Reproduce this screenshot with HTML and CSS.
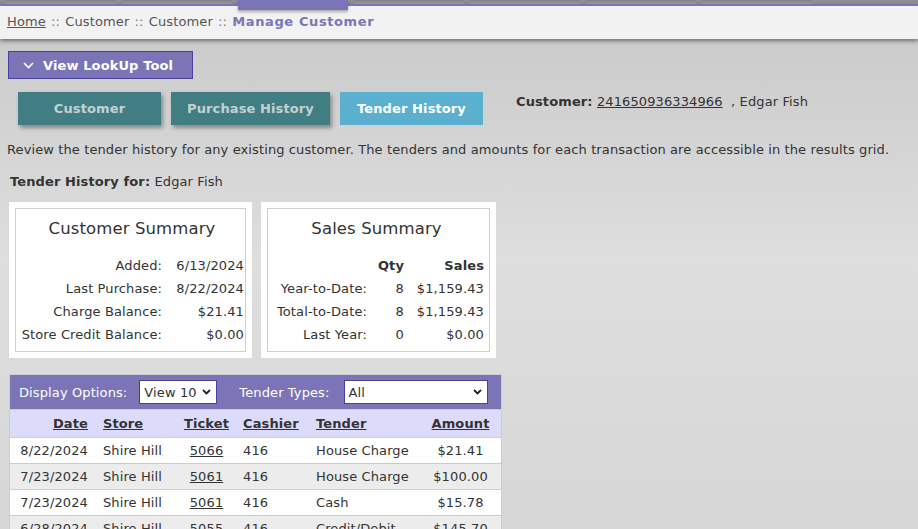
FILE: index.html
```html
<!DOCTYPE html>
<html>
<head>
    <title>Manage Customer</title>
    <link rel="stylesheet" href="styles.css">
</head>
<body>
    <div class="top-nav">
        <span class="nav-tab"></span>
        <span class="nav-tab"></span>
        <span class="nav-tab active"></span>
        <span class="nav-tab"></span>
        <span class="nav-tab"></span>
        <span class="nav-tab"></span>
        <span class="nav-tab"></span>
    </div>
    <div class="breadcrumb">
        <a href="#">Home</a> <span class="sep">::</span> Customer <span class="sep">::</span> Customer <span class="sep">::</span> <span class="current">Manage Customer</span>
    </div>

    <div class="content">
        <button class="lookup-btn">
            <svg width="11" height="7" viewBox="0 0 11 7"><path d="M1 1 L5.5 5.5 L10 1" fill="none" stroke="#fff" stroke-width="1.6"/></svg>
            View LookUp Tool
        </button>

        <div class="tab-row">
            <button class="page-tab tab-customer">Customer</button>
            <button class="page-tab tab-purchase">Purchase History</button>
            <button class="page-tab selected">Tender History</button>
            <div class="customer-info">
                <b>Customer:</b> <a href="#">241650936334966</a> &nbsp;, Edgar Fish
            </div>
        </div>

        <p class="description">Review the tender history for any existing customer. The tenders and amounts for each transaction are accessible in the results grid.</p>

        <div class="history-for"><b>Tender History for:</b> Edgar Fish</div>

        <div class="summaries">
            <div class="card">
                <div class="card-inner">
                    <h2>Customer Summary</h2>
                    <table class="summary-table cust">
                        <tr><td>Added:</td><td>6/13/2024</td></tr>
                        <tr><td>Last Purchase:</td><td>8/22/2024</td></tr>
                        <tr><td>Charge Balance:</td><td>$21.41</td></tr>
                        <tr><td>Store Credit Balance:</td><td>$0.00</td></tr>
                    </table>
                </div>
            </div>
            <div class="card">
                <div class="card-inner">
                    <h2>Sales Summary</h2>
                    <table class="summary-table sales">
                        <tr class="head"><td></td><td>Qty</td><td>Sales</td></tr>
                        <tr><td>Year-to-Date:</td><td>8</td><td>$1,159.43</td></tr>
                        <tr><td>Total-to-Date:</td><td>8</td><td>$1,159.43</td></tr>
                        <tr><td>Last Year:</td><td>0</td><td>$0.00</td></tr>
                    </table>
                </div>
            </div>
        </div>

        <div class="grid">
            <div class="grid-options">
                <label>Display Options:</label>
                <div class="fake-select view">View 10 <svg width="9" height="6" viewBox="0 0 9 6"><path d="M1 1 L4.5 4.5 L8 1" fill="none" stroke="#222" stroke-width="1.8"/></svg></div>
                <label class="types-label">Tender Types:</label>
                <div class="fake-select types">All <svg width="9" height="6" viewBox="0 0 9 6"><path d="M1 1 L4.5 4.5 L8 1" fill="none" stroke="#222" stroke-width="1.8"/></svg></div>
            </div>
            <table class="results">
                <thead>
                    <tr>
                        <th class="c-date"><a href="#">Date</a></th>
                        <th class="c-store"><a href="#">Store</a></th>
                        <th class="c-ticket"><a href="#">Ticket</a></th>
                        <th class="c-cashier"><a href="#">Cashier</a></th>
                        <th class="c-tender"><a href="#">Tender</a></th>
                        <th class="c-amount"><a href="#">Amount</a></th>
                    </tr>
                </thead>
                <tbody>
                    <tr>
                        <td class="c-date">8/22/2024</td><td class="c-store">Shire Hill</td>
                        <td class="c-ticket"><a href="#">5066</a></td><td class="c-cashier">416</td>
                        <td class="c-tender">House Charge</td><td class="c-amount">$21.41</td>
                    </tr>
                    <tr>
                        <td class="c-date">7/23/2024</td><td class="c-store">Shire Hill</td>
                        <td class="c-ticket"><a href="#">5061</a></td><td class="c-cashier">416</td>
                        <td class="c-tender">House Charge</td><td class="c-amount">$100.00</td>
                    </tr>
                    <tr>
                        <td class="c-date">7/23/2024</td><td class="c-store">Shire Hill</td>
                        <td class="c-ticket"><a href="#">5061</a></td><td class="c-cashier">416</td>
                        <td class="c-tender">Cash</td><td class="c-amount">$15.78</td>
                    </tr>
                    <tr>
                        <td class="c-date">6/28/2024</td><td class="c-store">Shire Hill</td>
                        <td class="c-ticket"><a href="#">5055</a></td><td class="c-cashier">416</td>
                        <td class="c-tender">Credit/Debit</td><td class="c-amount">$145.70</td>
                    </tr>
                </tbody>
            </table>
        </div>
    </div>
</body>
</html>
```

FILE: styles.css
```css
body {
    margin: 0;
    font-family: "DejaVu Sans", Verdana, sans-serif;
    font-size: 13px;
    letter-spacing: 0.11px;
    color: #333;
    background: linear-gradient(#cbcbcb 40px, #dedede 260px, #d6d6d6);
    min-height: 529px;
    overflow: hidden;
}

a {
    color: #333;
}

/* top navigation strip */
.top-nav {
    display: flex;
    align-items: flex-start;
    height: 4px;
    background: #8f8f8f;
    padding-left: 6px;
    gap: 6px;
}

.nav-tab {
    width: 110px;
    height: 4px;
    background: linear-gradient(#7f7f7f, #a2a2a2);
}

.nav-tab.active {
    height: 10px;
    background: #7b74b6;
    position: relative;
    z-index: 2;
    box-shadow: 0 2px 3px rgba(0, 0, 0, 0.3);
}

.breadcrumb {
    border-top: 2px solid #7b74b6;
    background: #f2f2f2;
    height: 33px;
    line-height: 32px;
    padding-left: 7px;
    color: #555;
    box-shadow: 0 2px 4px rgba(0, 0, 0, 0.45);
    position: relative;
    z-index: 1;
}

.breadcrumb a {
    color: #555;
}

.breadcrumb .sep {
    color: #777;
    margin: 0 1px;
}

.breadcrumb .current {
    color: #7b74b6;
    font-weight: bold;
    letter-spacing: 0.6px;
}

.content {
    padding: 12px 8px 0;
}

.lookup-btn {
    display: flex;
    align-items: center;
    gap: 9px;
    width: 185px;
    height: 28px;
    padding: 0 0 0 14px;
    background: #7b74b6;
    border: 1px solid #4a3e9f;
    color: #fff;
    font-family: inherit;
    font-size: 13px;
    letter-spacing: 0.11px;
    font-weight: bold;
}

.tab-row {
    display: flex;
    align-items: flex-start;
    gap: 10px;
    margin: 13px 0 0 10px;
}

.page-tab {
    height: 33px;
    border: none;
    background: #417e84;
    color: #c6d0d2;
    font-family: inherit;
    font-size: 13px;
    letter-spacing: 0.11px;
    font-weight: bold;
    box-shadow: 2px 3px 4px rgba(0, 0, 0, 0.35);
}

.tab-customer {
    width: 143px;
}

.tab-purchase {
    width: 159px;
}

.page-tab.selected {
    width: 143px;
    background: #5bb0cf;
    color: #fff;
    box-shadow: none;
}

.customer-info {
    margin: 2px 0 0 23px;
}

.description {
    margin: 16px 0 0 -1px;
    line-height: 18px;
}

.history-for {
    margin: 14px 0 0 2px;
    line-height: 18px;
}

.summaries {
    display: flex;
    gap: 9px;
    margin: 11px 0 0 1px;
}

.card {
    background: #fff;
    padding: 6px;
}

.card-inner {
    border: 1px solid #cfcfcf;
    height: 142px;
}

.card h2 {
    margin: 10px 0 16px;
    font-size: 16.5px;
    font-weight: normal;
    text-align: center;
}

.card:first-child .card-inner {
    width: 224px;
    padding: 0 1px 0 4px;
}

.card:last-child .card-inner {
    width: 215px;
    padding: 0 5px 0 1px;
}

.summary-table {
    border-collapse: collapse;
    width: 100%;
}

.summary-table td {
    text-align: right;
    padding: 0;
    height: 23px;
    line-height: 23px;
}

.summary-table.cust td:last-child {
    width: 82px;
}

.summary-table.sales td:nth-child(2) {
    width: 37px;
}

.summary-table.sales td:nth-child(3) {
    width: 80px;
}

.summary-table .head td {
    font-weight: bold;
}

/* results grid */
.grid {
    width: 493px;
    margin: 16px 0 0 1px;
    border: 1px solid #cdcdcd;
    box-sizing: border-box;
}

.grid-options {
    display: flex;
    align-items: center;
    height: 34px;
    background: #7b74b6;
    color: #fff;
    padding-left: 9px;
}

.grid-options label {
    margin-right: 12px;
}

.grid-options .types-label {
    margin-left: 22px;
    margin-right: 14px;
}

.fake-select {
    display: flex;
    align-items: center;
    justify-content: space-between;
    background: #fff;
    border: 1px solid #4a3e9f;
    color: #333;
    padding: 0 5px 0 4px;
    box-sizing: border-box;
    height: 24px;
}

.fake-select.view {
    width: 78px;
}

.fake-select.types {
    width: 144px;
}

.results {
    width: 100%;
    table-layout: fixed;
    border-collapse: collapse;
    background: #fff;
}

.results th,
.results td {
    padding: 0;
    border-top: 1px solid #cdcdcd;
    box-sizing: border-box;
}

.results th {
    background: #dcdcfa;
    height: 28px;
    font-weight: bold;
}

.results th a {
    color: #333;
}

.results td {
    height: 26px;
}

.results tbody tr:nth-child(even) td {
    background: #ececec;
}

.results .c-date {
    width: 84px;
    text-align: right;
    padding-right: 6px;
}

.results .c-store {
    width: 79px;
    text-align: left;
    padding-left: 9px;
}

.results .c-ticket {
    width: 64px;
    text-align: center;
    padding-left: 3px;
}

.results .c-cashier {
    width: 69px;
    text-align: left;
    padding-left: 6px;
}

.results .c-tender {
    width: 114px;
    text-align: left;
    padding-left: 10px;
}

.results .c-amount {
    text-align: center;
}
```
